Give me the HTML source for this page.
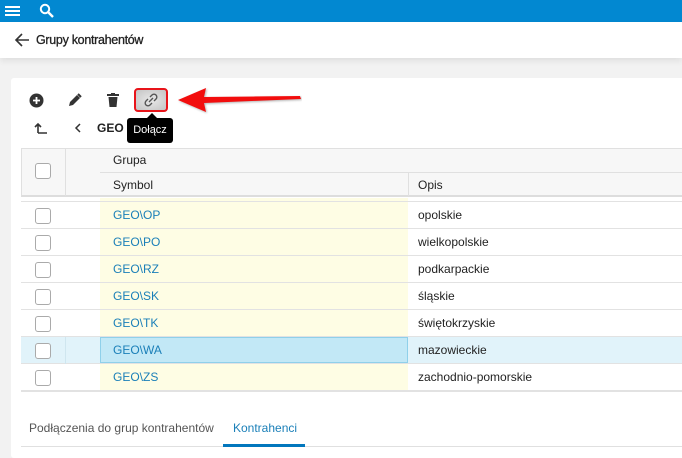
<!DOCTYPE html>
<html><head><meta charset="utf-8">
<style>
*{box-sizing:border-box;margin:0;padding:0}
body{width:682px;height:450px;overflow:hidden;background:#f2f2f2;font-family:"Liberation Sans",sans-serif;font-size:12px;color:#222;position:relative}
.abs{position:absolute}
.top{left:0;top:0;width:682px;height:22px;background:#0288d1}
.hdr{left:0;top:22px;width:682px;height:36px;background:#fff;box-shadow:0 3px 6px rgba(0,0,0,.08)}
.card{left:11px;top:78px;width:680px;height:380px;background:#fff;border-radius:3px}
.cb{position:absolute;width:16px;height:16px;border:1px solid #aaa;border-radius:3px;background:#fff}
.row{position:absolute;left:21px;width:661px;height:27px;border-bottom:1px solid #e2e2e2}
.sym{position:absolute;left:113px;color:#1a7fb8;line-height:27px}
.op{position:absolute;left:418px;line-height:27px}
</style></head><body>
<div class="abs top">
 <svg class="abs" style="left:5px;top:4px" width="16" height="14"><rect y="2" width="15" height="2" fill="#fff"/><rect y="6" width="15" height="2" fill="#fff"/><rect y="10" width="15" height="2" fill="#fff"/></svg>
 <svg class="abs" style="left:39px;top:3px" width="16" height="16"><circle cx="6" cy="6" r="4.2" stroke="#fff" stroke-width="2" fill="none"/><path d="M9 9l5 5" stroke="#fff" stroke-width="2.4"/></svg>
</div>
<div class="abs hdr">
 <svg class="abs" style="left:14px;top:11px" width="16" height="14"><path d="M15 7H2M8 1L2 7l6 6" stroke="#333" stroke-width="1.6" fill="none"/></svg>
 <div class="abs" style="left:36px;top:11px;font-size:12.5px;letter-spacing:-0.3px;color:#222;-webkit-text-stroke:0.3px #222">Grupy kontrahentów</div>
</div>
<div class="abs card"></div>
<svg class="abs" style="left:29px;top:93px" width="15" height="15"><circle cx="7.5" cy="7.5" r="7" fill="#333"/><path d="M7.5 4v7M4 7.5h7" stroke="#fff" stroke-width="1.8"/></svg>
<svg class="abs" style="left:68px;top:93px" width="14" height="14"><path d="M1 13l1-4 7-7 3 3-7 7z" fill="#333"/><path d="M10 1l3 3" stroke="#333" stroke-width="2"/></svg>
<svg class="abs" style="left:107px;top:93px" width="12" height="14"><rect x="0" y="1" width="12" height="2" fill="#333"/><rect x="4" y="0" width="4" height="2" fill="#333"/><path d="M1.5 4h9l-1 10h-7z" fill="#333"/></svg>
<div class="abs" style="left:134px;top:88px;width:34px;height:24px;border:2px solid #e8141a;border-radius:4px;background:radial-gradient(#e8e8e8,#c4c4c4)"></div>
<svg class="abs" style="left:143px;top:92px" width="16" height="16"><g stroke="#555" stroke-width="1.4" fill="none"><path d="M7 5l2-2a2.8 2.8 0 014 4l-2 2"/><path d="M9 11l-2 2a2.8 2.8 0 01-4-4l2-2"/><path d="M6 10l4-4"/></g></svg>
<svg class="abs" style="left:176px;top:84px" width="126" height="32"><path d="M2 16L30 4l-2 9 96 -1 1 3-97 4 2 9z" fill="#f20d0d" style="filter:drop-shadow(1px 1px 1px rgba(0,0,0,.3))"/></svg>
<svg class="abs" style="left:34px;top:121px" width="14" height="14"><path d="M4 12V3M1 6l3-3 3 3M4 12h9" stroke="#333" stroke-width="1.6" fill="none"/></svg>
<svg class="abs" style="left:74px;top:122px" width="8" height="12"><path d="M6 2L2 6l4 4" stroke="#333" stroke-width="1.5" fill="none"/></svg>
<div class="abs" style="left:97px;top:121px;font-weight:bold;font-size:12px;color:#222">GEO</div>
<div class="abs" style="left:127px;top:118px;width:46px;height:25px;background:#000;border-radius:3px;color:#fff;font-size:11px;line-height:25px;text-align:center">Dołącz</div>
<div class="abs" style="left:147px;top:113px;width:0;height:0;border-left:5px solid transparent;border-right:5px solid transparent;border-bottom:5px solid #000"></div>
<div class="abs" style="left:21px;top:148px;width:661px;height:49px;background:#f7f7f7;border-top:1px solid #e0e0e0;border-left:1px solid #e0e0e0;border-bottom:2px solid #ddd"></div>
<div class="abs" style="left:65px;top:148px;width:1px;height:48px;background:#e0e0e0"></div>
<div class="abs" style="left:100px;top:172px;width:582px;height:1px;background:#e0e0e0"></div>
<div class="abs" style="left:408px;top:172px;width:1px;height:24px;background:#e0e0e0"></div>
<div class="cb" style="left:35px;top:163px"></div>
<div class="abs" style="left:113px;top:153px">Grupa</div>
<div class="abs" style="left:113px;top:178px">Symbol</div>
<div class="abs" style="left:418px;top:178px">Opis</div>
<div class="abs" style="left:100px;top:198px;width:308px;height:193px;background:#fefde4"></div>
<div class="abs" style="left:21px;top:201px;width:661px;height:1px;background:#e2e2e2"></div>
<div class="row" style="top:202px"><div class="cb" style="left:14px;top:6px"></div><div class="sym" style="left:92px">GEO\OP</div><div class="op" style="left:397px">opolskie</div></div>
<div class="row" style="top:229px"><div class="cb" style="left:14px;top:6px"></div><div class="sym" style="left:92px">GEO\PO</div><div class="op" style="left:397px">wielkopolskie</div></div>
<div class="row" style="top:256px"><div class="cb" style="left:14px;top:6px"></div><div class="sym" style="left:92px">GEO\RZ</div><div class="op" style="left:397px">podkarpackie</div></div>
<div class="row" style="top:283px"><div class="cb" style="left:14px;top:6px"></div><div class="sym" style="left:92px">GEO\SK</div><div class="op" style="left:397px">śląskie</div></div>
<div class="row" style="top:310px"><div class="cb" style="left:14px;top:6px"></div><div class="sym" style="left:92px">GEO\TK</div><div class="op" style="left:397px">świętokrzyskie</div></div>
<div class="row" style="top:337px;background:#e1f3fa"><div class="abs" style="left:44px;top:0;width:1px;height:27px;background:#cfe6ef"></div><div class="abs" style="left:79px;top:0;width:308px;height:26px;background:#c2e8f6;border:1px solid #8fd0ea"></div><div class="cb" style="left:14px;top:6px"></div><div class="sym" style="left:92px">GEO\WA</div><div class="op" style="left:397px">mazowieckie</div></div>
<div class="row" style="top:364px"><div class="cb" style="left:14px;top:6px"></div><div class="sym" style="left:92px">GEO\ZS</div><div class="op" style="left:397px">zachodnio-pomorskie</div></div>
<div class="abs" style="left:21px;top:391px;width:661px;height:1px;background:#e2e2e2"></div>
<div class="abs" style="left:29px;top:421px;color:#555">Podłączenia do grup kontrahentów</div>
<div class="abs" style="left:233px;top:421px;color:#1a7fb8">Kontrahenci</div>
<div class="abs" style="left:21px;top:446px;width:661px;height:1px;background:#e0e0e0"></div>
<div class="abs" style="left:223px;top:444px;width:82px;height:3px;background:#0277bd"></div>
</body></html>
